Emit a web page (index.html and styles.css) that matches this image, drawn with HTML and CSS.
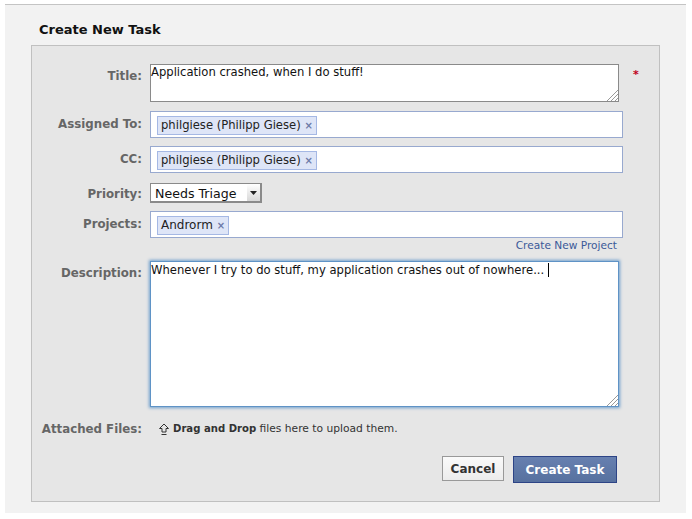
FILE: index.html
```html
<!DOCTYPE html>
<html>
  <head>
    <title>Create New Task</title>
    <link rel="stylesheet" href="styles.css">
  </head>

  <body>
    <main class="panel">
      <h1>Create New Task</h1>
      <form class="box">
        <div class="row row-title">
          <label>Title:</label>
          <div class="textarea title-area">
            Application crashed, when I do stuff!
            <svg class="grip" width="12" height="12" viewBox="0 0 12 12"><path d="M1 12L12 1M5 12L12 5M9 12L12 9" stroke="#999" fill="none"/></svg>
          </div>
          <span class="required">*</span>
        </div>
        <div class="row row-token">
          <label>Assigned To:</label>
          <div class="tokenizer"><span class="token token-user">philgiese (Philipp Giese) <span class="remove">×</span></span></div>
        </div>
        <div class="row row-token">
          <label>CC:</label>
          <div class="tokenizer"><span class="token token-user">philgiese (Philipp Giese) <span class="remove">×</span></span></div>
        </div>
        <div class="row row-priority">
          <label>Priority:</label>
          <div class="select">
            <span class="select-value">Needs Triage</span>
            <span class="select-arrow"><svg width="7" height="4" viewBox="0 0 7 4"><path d="M0 0H7L3.5 4Z" fill="#222"/></svg></span>
          </div>
        </div>
        <div class="row row-projects">
          <label>Projects:</label>
          <div class="tokenizer"><span class="token">Androrm <span class="remove">×</span></span></div>
        </div>
        <p class="new-project"><a href="#">Create New Project</a></p>
        <div class="row row-description">
          <label>Description:</label>
          <div class="textarea description-area">
            Whenever I try to do stuff, my application crashes out of nowhere... <span class="caret"></span>
            <svg class="grip" width="12" height="12" viewBox="0 0 12 12"><path d="M1 12L12 1M5 12L12 5M9 12L12 9" stroke="#999" fill="none"/></svg>
          </div>
        </div>
        <div class="row row-files">
          <label>Attached Files:</label>
          <p class="drop">
            <svg width="10" height="13" viewBox="0 0 10 13"><path d="M5 1L9.5 5.5H7V9H3V5.5H.5ZM2.5 11.5H7.5" stroke="#333" fill="none"/></svg>
            <span><b>Drag and Drop</b> files here to upload them.</span>
          </p>
        </div>
        <div class="buttons">
          <a class="btn btn-cancel" href="#">Cancel</a>
          <button class="btn btn-submit" type="button">Create Task</button>
        </div>
      </form>
    </main>
  </body>
</html>
```

FILE: styles.css
```css
html, body {
  margin: 0;
  background: #fff;
}
body {
  font-family: "DejaVu Sans", sans-serif;
  font-size: 12px;
  color: #222;
}
.panel {
  width: 681px;
  height: 509px;
  margin: 4px 0 0 5px;
  box-sizing: border-box;
  border-top: 1px solid #c4c4c4;
  background: #f2f2f2;
  padding: 0 26px;
}
h1 {
  margin: 0;
  padding: 16px 0 0 8px;
  height: 24px;
  font-size: 13px;
  line-height: 18px;
  font-weight: bold;
  color: #111;
}
.box {
  width: 629px;
  height: 457px;
  box-sizing: border-box;
  border: 1px solid #c0c0c0;
  background: #e6e6e6;
  padding: 18px 0 0;
}
.row {
  display: grid;
  grid-template-columns: 110px auto 1fr;
  column-gap: 8px;
}
.row label {
  text-align: right;
  font-weight: bold;
  font-size: 11.8px;
  line-height: 16px;
  color: #666;
}
.textarea {
  position: relative;
  box-sizing: border-box;
  width: 469px;
  background: #fff;
  font-size: 11.6px;
  line-height: 14px;
  color: #111;
  padding: 1px 0 0;
}
.grip {
  position: absolute;
  right: 0;
  bottom: 0;
}
.title-area {
  height: 38px;
  padding-top: 0;
  border: 1px solid #8a8a8a;
}
.row-title {
  margin-bottom: 9px;
}
.row-title label {
  padding-top: 4px;
}
.required {
  margin: 4px 0 0 6px;
  color: #c00020;
  font-weight: bold;
  font-size: 11px;
}
.tokenizer {
  box-sizing: border-box;
  width: 473px;
  height: 27px;
  background: #fff;
  border: 1px solid #98a9cf;
  padding: 4px 6px;
  display: flex;
  align-items: flex-start;
}
.token {
  height: 19px;
  box-sizing: border-box;
  line-height: 17px;
  background: #dee5f7;
  border: 1px solid #a5b8e4;
  padding: 0 3px;
  font-size: 12px;
  color: #222;
  white-space: nowrap;
}
.token-user {
  font-size: 11.6px;
}
.remove {
  color: #6d7aa8;
  font-weight: bold;
  font-size: 10px;
}
.row-token {
  margin-bottom: 8px;
}
.row-token label {
  padding-top: 5px;
}
.row-priority {
  margin: 10px 0 8px;
}
.row-priority label {
  padding-top: 3px;
}
.select {
  box-sizing: border-box;
  width: 112px;
  height: 20px;
  display: flex;
  background: #fff;
  border: 1px solid #8a8a8a;
  border-width: 1px 2px 2px 1px;
  font-size: 12.6px;
  line-height: 20px;
  color: #111;
}
.select-value {
  flex: 1;
  height: 17px;
  padding-left: 4px;
}
.select-arrow {
  width: 13px;
  display: flex;
  align-items: center;
  justify-content: center;
  background: linear-gradient(#fff, #d8d8d8);
}
.row-projects label {
  padding-top: 5px;
}
.new-project {
  margin: 0;
  height: 23px;
  padding-right: 42px;
  text-align: right;
  font-size: 10.6px;
  line-height: 15px;
}
.new-project a {
  color: #3b5998;
  text-decoration: none;
}
.description-area {
  height: 146px;
  border: 1px solid #5f93c6;
  box-shadow: 0 0 3px 1px #6f9fcc;
}
.row-description label {
  padding-top: 4px;
}
.caret {
  display: inline-block;
  width: 1px;
  height: 14px;
  background: #000;
  vertical-align: text-bottom;
}
.row-files {
  margin-top: 14px;
}
.drop {
  margin: 0;
  padding-left: 9px;
  display: flex;
  align-items: center;
  gap: 4px;
  font-size: 10.7px;
  line-height: 16px;
  color: #333;
  white-space: nowrap;
}
.drop b {
  font-size: 10.1px;
}
.buttons {
  margin-top: 19px;
  padding-right: 42px;
  display: flex;
  justify-content: flex-end;
  align-items: flex-start;
  gap: 9px;
}
.btn {
  display: block;
  box-sizing: border-box;
  font-family: inherit;
  font-size: 12px;
  font-weight: bold;
  text-align: center;
  text-decoration: none;
}
.btn-cancel {
  width: 62px;
  height: 25px;
  line-height: 24px;
  color: #333;
  background: linear-gradient(#fafafa, #ececec);
  border: 1px solid #999;
}
.btn-submit {
  width: 104px;
  height: 27px;
  padding: 0;
  color: #fff;
  background: linear-gradient(#6780b0, #57719f);
  border: 1px solid #2d4486;
}
```
